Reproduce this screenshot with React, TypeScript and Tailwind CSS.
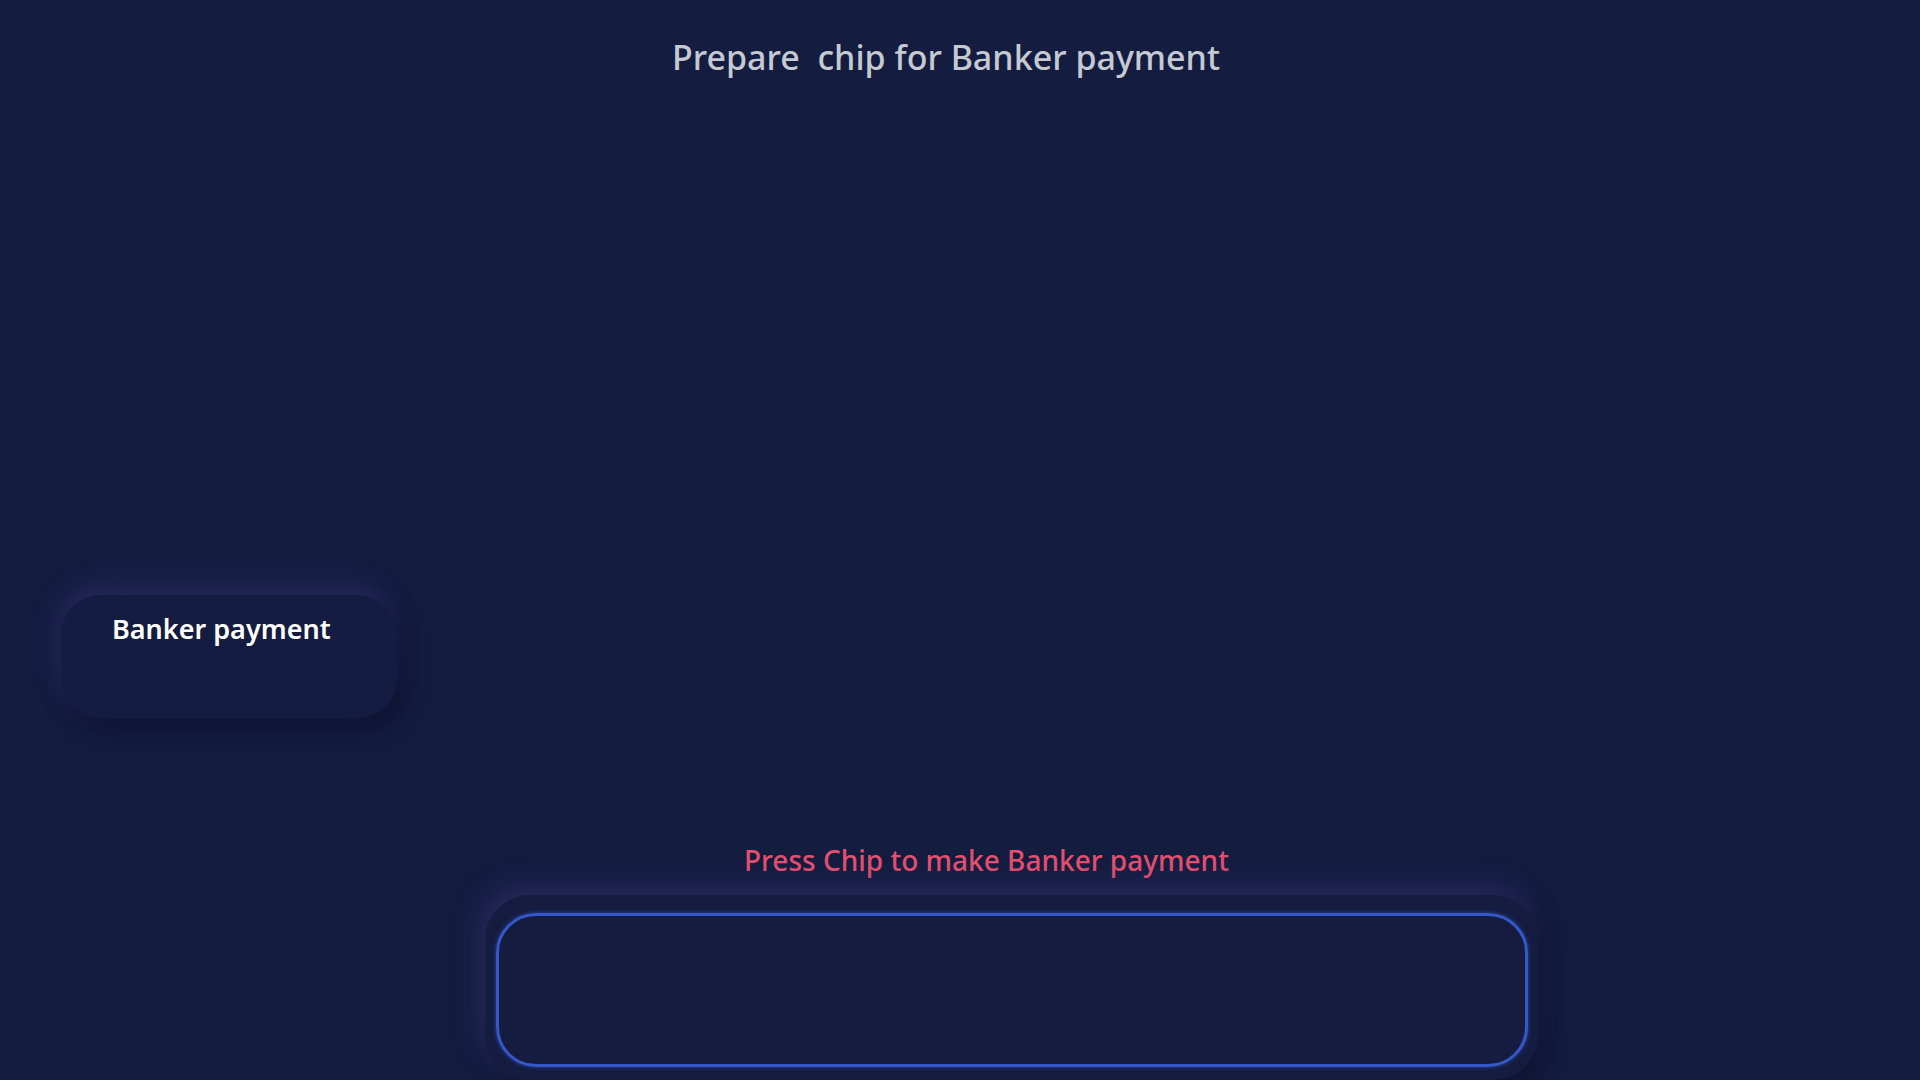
import React from "react";

export default function App() {
  return (
    <div
      className="relative w-full h-[1080px] overflow-hidden bg-[#141c40] flex flex-col"
      style={{ fontFamily: '"Noto Sans", "Open Sans", sans-serif' }}
    >
      <div className="pt-[37px] pl-[672px] text-[34px] leading-[40px] font-medium text-[#c5c9d2] whitespace-pre">
        {"Prepare  chip for Banker payment"}
      </div>

      <div className="mt-[518px] ml-[61px] w-[336px] h-[132px] rounded-[40px] bg-[#151c41] pl-[51px] pt-[16px] shadow-[-4px_-10px_24px_rgba(58,58,120,0.45),8px_10px_22px_rgba(10,14,40,0.7)]">
        <div className="text-[27px] leading-[36px] font-semibold text-white">Banker payment</div>
      </div>

      <div className="mt-[124px] pl-[744px] text-[28px] leading-[36px] font-medium text-[#e4506e]">
        Press Chip to make Banker payment
      </div>

      <div className="mt-[17px] ml-[485px] w-[1053px] h-[200px] rounded-[45px] bg-[#151c40] pl-[11px] pr-[10px] pt-[18px] shadow-[-6px_-10px_26px_rgba(58,58,120,0.5),8px_8px_22px_rgba(10,14,40,0.7)]">
        <div className="w-full h-[154px] rounded-[40px] border-[3px] border-[#3557c8] shadow-[0_0_4px_rgba(60,100,230,0.6)]" />
      </div>
    </div>
  );
}
